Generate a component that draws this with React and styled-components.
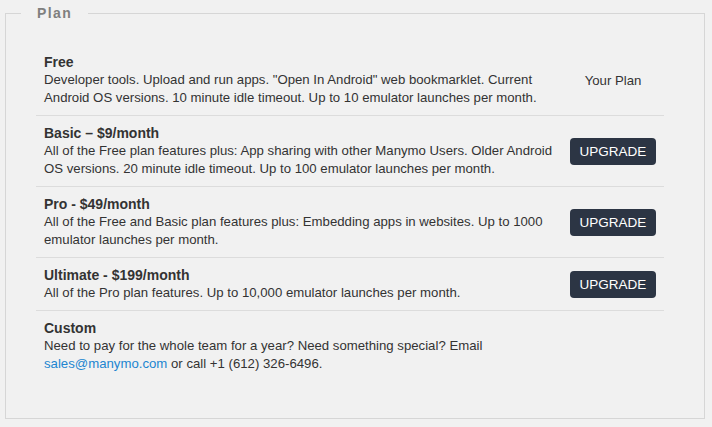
import React from 'react';
import styled, { createGlobalStyle } from 'styled-components';

const GlobalStyle = createGlobalStyle`
  html, body {
    margin: 0;
    background: #f1f1f1;
  }
  body {
    font-family: "Liberation Sans", Arial, sans-serif;
    font-size: 13.2px;
    color: #333;
  }
`;

const Page = styled.div`
  padding: 5px 7px 8px 5px;
`;

const Fieldset = styled.fieldset`
  margin: 0;
  border: 1px solid #d6d6d6;
  padding: 24px 40px 37px 30px;
`;

const Legend = styled.legend`
  margin-left: -15px;
  padding: 0 16px;
  font-size: 14px;
  font-weight: bold;
  letter-spacing: 1.4px;
  color: #7f7f7f;
`;

const Row = styled.div`
  display: grid;
  grid-template-columns: 1fr 102px;
  align-items: center;
  padding: 8px 0;
  border-bottom: ${(p) => (p.$last ? 'none' : '1px solid #dcdcdc')};
`;

const Info = styled.div`
  padding: 0 0 0 8px;
  line-height: 18px;
`;

const Title = styled.div`
  font-size: 14px;
  font-weight: bold;
  color: #333;
`;

const Desc = styled.div`
  font-size: 13.2px;
  color: #333;
`;

const Action = styled.div`
  display: flex;
  justify-content: center;
  font-size: 13.2px;
`;

const Button = styled.button`
  height: 27px;
  width: 86px;
  padding: 0;
  border: none;
  border-radius: 4px;
  background: #2c3544;
  color: #fff;
  font-family: "Liberation Sans", Arial, sans-serif;
  font-size: 13.5px;
  cursor: pointer;
`;

const Link = styled.a`
  color: #2185d0;
  text-decoration: none;
`;

const plans = [
  {
    title: 'Free',
    desc: 'Developer tools. Upload and run apps. "Open In Android" web bookmarklet. Current Android OS versions. 10 minute idle timeout. Up to 10 emulator launches per month.',
    current: true,
  },
  {
    title: 'Basic \u2013 $9/month',
    desc: 'All of the Free plan features plus: App sharing with other Manymo Users. Older Android OS versions. 20 minute idle timeout. Up to 100 emulator launches per month.',
  },
  {
    title: 'Pro - $49/month',
    desc: 'All of the Free and Basic plan features plus: Embedding apps in websites. Up to 1000 emulator launches per month.',
  },
  {
    title: 'Ultimate - $199/month',
    desc: 'All of the Pro plan features. Up to 10,000 emulator launches per month.',
  },
];

export default function App() {
  return (
    <Page>
      <GlobalStyle />
      <Fieldset>
        <Legend>Plan</Legend>
        {plans.map((plan) => (
          <Row key={plan.title}>
            <Info>
              <Title>{plan.title}</Title>
              <Desc>{plan.desc}</Desc>
            </Info>
            <Action>{plan.current ? 'Your Plan' : <Button type="button">UPGRADE</Button>}</Action>
          </Row>
        ))}
        <Row $last>
          <Info>
            <Title>Custom</Title>
            <Desc>
              Need to pay for the whole team for a year? Need something special? Email{' '}
              <Link href="mailto:sales@manymo.com">sales@manymo.com</Link> or call +1 (612) 326-6496.
            </Desc>
          </Info>
          <Action />
        </Row>
      </Fieldset>
    </Page>
  );
}
